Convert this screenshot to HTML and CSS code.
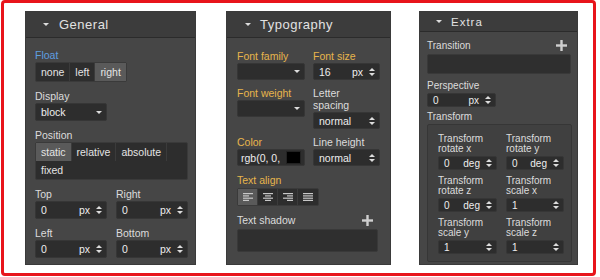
FILE: index.html
```html
<!DOCTYPE html>
<html lang="en">
<head>
  <meta charset="UTF-8" />
  <title>Style manager panels</title>
  <link rel="stylesheet" href="styles.css">
</head>
<body>
  <div class="frame">

    <!-- General -->
    <section class="panel panel-general">
      <header class="panel-head"><span class="head-caret"></span>General</header>
      <div class="panel-body">
        <div class="field">
          <div class="label label-blue">Float</div>
          <div class="radio-group">
            <span class="radio">none</span><span class="radio">left</span><span class="radio active">right</span>
          </div>
        </div>
        <div class="field">
          <div class="label">Display</div>
          <div class="select select-display">block<span class="caret"></span></div>
        </div>
        <div class="field">
          <div class="label">Position</div>
          <div class="radio-group radio-wrap">
            <span class="radio active">static</span><span class="radio">relative</span><span class="radio">absolute</span><span class="radio">fixed</span>
          </div>
        </div>
        <div class="field-pair">
          <div>
            <div class="label">Top</div>
            <div class="number"><span class="value">0</span><span class="unit">px</span><span class="spin"><i class="up"></i><i class="down"></i></span></div>
          </div>
          <div>
            <div class="label">Right</div>
            <div class="number"><span class="value">0</span><span class="unit">px</span><span class="spin"><i class="up"></i><i class="down"></i></span></div>
          </div>
        </div>
        <div class="field-pair">
          <div>
            <div class="label">Left</div>
            <div class="number"><span class="value">0</span><span class="unit">px</span><span class="spin"><i class="up"></i><i class="down"></i></span></div>
          </div>
          <div>
            <div class="label">Bottom</div>
            <div class="number"><span class="value">0</span><span class="unit">px</span><span class="spin"><i class="up"></i><i class="down"></i></span></div>
          </div>
        </div>
      </div>
    </section>

    <!-- Typography -->
    <section class="panel panel-typo">
      <header class="panel-head"><span class="head-caret"></span>Typography</header>
      <div class="panel-body">
        <div class="typo-grid">
          <div>
            <div class="label label-yellow">Font family</div>
            <div class="select"><span class="caret"></span></div>
          </div>
          <div>
            <div class="label label-yellow">Font size</div>
            <div class="number"><span class="value">16</span><span class="unit">px</span><span class="spin"><i class="up"></i><i class="down"></i></span></div>
          </div>
          <div>
            <div class="label label-yellow">Font weight</div>
            <div class="select"><span class="caret"></span></div>
          </div>
          <div>
            <div class="label">Letter<br>spacing</div>
            <div class="number"><span class="value">normal</span><span class="spin"><i class="up"></i><i class="down"></i></span></div>
          </div>
          <div>
            <div class="label label-yellow">Color</div>
            <div class="color-input"><span class="value">rgb(0, 0,</span><span class="swatch"></span></div>
          </div>
          <div>
            <div class="label">Line height</div>
            <div class="number"><span class="value">normal</span><span class="spin"><i class="up"></i><i class="down"></i></span></div>
          </div>
        </div>
        <div class="field">
          <div class="label label-yellow">Text align</div>
          <div class="radio-group align-group">
            <span class="radio active">
              <svg width="10" height="8" viewBox="0 0 10 8"><rect x="0" y="0" width="10" height="1.2"/><rect x="0" y="2.3" width="6" height="1.2"/><rect x="0" y="4.6" width="10" height="1.2"/><rect x="0" y="6.8" width="6" height="1.2"/></svg>
            </span><span class="radio">
              <svg width="10" height="8" viewBox="0 0 10 8"><rect x="0" y="0" width="10" height="1.2"/><rect x="2" y="2.3" width="6" height="1.2"/><rect x="0" y="4.6" width="10" height="1.2"/><rect x="2" y="6.8" width="6" height="1.2"/></svg>
            </span><span class="radio">
              <svg width="10" height="8" viewBox="0 0 10 8"><rect x="0" y="0" width="10" height="1.2"/><rect x="4" y="2.3" width="6" height="1.2"/><rect x="0" y="4.6" width="10" height="1.2"/><rect x="4" y="6.8" width="6" height="1.2"/></svg>
            </span><span class="radio">
              <svg width="10" height="8" viewBox="0 0 10 8"><rect x="0" y="0" width="10" height="1.2"/><rect x="0" y="2.3" width="10" height="1.2"/><rect x="0" y="4.6" width="10" height="1.2"/><rect x="0" y="6.8" width="10" height="1.2"/></svg>
            </span>
          </div>
        </div>
        <div class="field">
          <div class="label label-row">Text shadow
            <svg class="plus" width="11" height="11" viewBox="0 0 11 11"><rect x="4.3" y="0" width="2.4" height="11"/><rect x="0" y="4.3" width="11" height="2.4"/></svg>
          </div>
          <div class="layer-box typo-shadow"></div>
        </div>
      </div>
    </section>

    <!-- Extra -->
    <section class="panel panel-extra">
      <header class="panel-head"><span class="head-caret"></span>Extra</header>
      <div class="panel-body">
        <div class="field">
          <div class="label label-row">Transition
            <svg class="plus" width="11" height="11" viewBox="0 0 11 11"><rect x="4.3" y="0" width="2.4" height="11"/><rect x="0" y="4.3" width="11" height="2.4"/></svg>
          </div>
          <div class="layer-box extra-transition"></div>
        </div>
        <div class="field field-tight">
          <div class="label">Perspective</div>
          <div class="number number-persp"><span class="value">0</span><span class="unit">px</span><span class="spin"><i class="up"></i><i class="down"></i></span></div>
        </div>
        <div class="field">
          <div class="label">Transform</div>
          <div class="transform-box">
            <div>
              <div class="label">Transform<br>rotate x</div>
              <div class="number"><span class="value">0</span><span class="unit">deg</span><span class="spin"><i class="up"></i><i class="down"></i></span></div>
            </div>
            <div>
              <div class="label">Transform<br>rotate y</div>
              <div class="number"><span class="value">0</span><span class="unit">deg</span><span class="spin"><i class="up"></i><i class="down"></i></span></div>
            </div>
            <div>
              <div class="label">Transform<br>rotate z</div>
              <div class="number"><span class="value">0</span><span class="unit">deg</span><span class="spin"><i class="up"></i><i class="down"></i></span></div>
            </div>
            <div>
              <div class="label">Transform<br>scale x</div>
              <div class="number"><span class="value">1</span><span class="spin"><i class="up"></i><i class="down"></i></span></div>
            </div>
            <div>
              <div class="label">Transform<br>scale y</div>
              <div class="number"><span class="value">1</span><span class="spin"><i class="up"></i><i class="down"></i></span></div>
            </div>
            <div>
              <div class="label">Transform<br>scale z</div>
              <div class="number"><span class="value">1</span><span class="spin"><i class="up"></i><i class="down"></i></span></div>
            </div>
          </div>
        </div>
      </div>
    </section>

  </div>
</body>
</html>
```

FILE: styles.css
```css
* {
  box-sizing: border-box;
}

body {
  margin: 0;
  background: #fff;
  font-family: 'Liberation Sans', Arial, Helvetica, sans-serif;
  color: #ddd;
}

.frame {
  display: flex;
  align-items: flex-start;
  width: 595px;
  height: 276px;
  margin-left: 1px;
  padding: 8px 0 0 21px;
  border: 3px solid #e8141b;
  border-radius: 4px;
}

/* ---------- panels ---------- */

.panel {
  height: 254px;
  background: #464646;
  border: 1px solid #3a3a3a;
  overflow: hidden;
}

.panel-general { width: 171px; }
.panel-typo { width: 165px; margin-left: 30px; }
.panel-extra { width: 159px; margin-left: 28px; }

.panel-head {
  display: flex;
  align-items: center;
  height: 26px;
  background: #3c3c3c;
  border-bottom: 1px solid #2b2b2b;
  font-size: 13px;
  letter-spacing: 0.5px;
  color: #e2e2e2;
  padding-left: 17px;
}

.head-caret {
  width: 0;
  height: 0;
  border-left: 3px solid transparent;
  border-right: 3px solid transparent;
  border-top: 3px solid #ddd;
  margin-right: 10px;
}

.panel-body {
  padding: 11px 9px 0 9px;
}

.panel-typo .panel-head { padding-left: 18px; }
.panel-typo .head-caret { margin-right: 9px; }
.panel-typo .panel-body { padding: 12px 12px 0 10px; }

.panel-extra .panel-head {
  height: 20px;
  font-size: 11.5px;
  letter-spacing: 1px;
  padding-left: 16px;
}
.panel-extra .head-caret { margin-right: 9px; }
.panel-extra .panel-body { padding: 6px 5px 0 7px; }

/* ---------- labels ---------- */

.label {
  font-size: 10.5px;
  line-height: 12px;
  margin-bottom: 1px;
  color: #dcdcdc;
}

.label-blue { color: #5f9fe0; }
.label-yellow { color: #e6b54c; }

.label-row {
  display: flex;
  justify-content: space-between;
  align-items: center;
  height: 14px;
  margin-bottom: 2px;
  padding-right: 5px;
}

.plus { fill: #cfcfcf; }

.field { margin-bottom: 8px; }

.field-pair {
  display: grid;
  grid-template-columns: 72px 72px;
  gap: 9px;
  margin-bottom: 8px;
}

/* ---------- controls ---------- */

.radio-group {
  display: inline-flex;
  background: #2d2d2d;
  border: 1px solid #3a3a3a;
  border-radius: 2px;
  height: 20px;
  font-size: 10.5px;
}

.radio {
  display: flex;
  align-items: center;
  padding: 0 5px;
  border-right: 1px solid #3b3b3b;
  color: #e4e4e4;
}

.radio:last-child { border-right: none; }

.radio.active { background: #5a5a5a; }

.radio-wrap {
  display: flex;
  flex-wrap: wrap;
  height: 38px;
  width: 153px;
}

.radio-wrap .radio { height: 18px; }

.align-group { height: 18px; }
.align-group .radio {
  width: 20px;
  justify-content: center;
  padding: 0;
}
.align-group svg { fill: #c8c8c8; }

.select,
.number,
.color-input {
  display: flex;
  align-items: center;
  height: 17px;
  background: #2d2d2d;
  border: 1px solid #363636;
  border-radius: 2px;
  font-size: 10.5px;
  color: #eee;
  padding: 0 4px 0 5px;
}

.select { justify-content: space-between; }
.select-display { width: 72px; height: 18px; }

.caret {
  width: 0;
  height: 0;
  margin-left: auto;
  border-left: 3px solid transparent;
  border-right: 3px solid transparent;
  border-top: 3px solid #ddd;
}

.panel-general .number { height: 18px; }

.number .value { flex: 1; }
.number .unit { margin-right: 6px; }

.spin {
  display: flex;
  flex-direction: column;
  gap: 2px;
}

.spin i {
  display: block;
  width: 0;
  height: 0;
  border-left: 3px solid transparent;
  border-right: 3px solid transparent;
}

.spin .up { border-bottom: 3px solid #ddd; }
.spin .down { border-top: 3px solid #ddd; }

.typo-grid {
  display: grid;
  grid-template-columns: 68px 67px;
  column-gap: 8px;
  row-gap: 7px;
  align-items: start;
  margin-bottom: 8px;
}

.color-input { padding: 0 3px 0 3px; }
.color-input .value { flex: 1; white-space: nowrap; overflow: hidden; }
.swatch {
  width: 15px;
  height: 13px;
  background: #000;
  border: 1px solid #222;
}

.layer-box {
  background: #2f2f2f;
  border: 1px solid #393939;
  border-radius: 2px;
}

.panel-typo .field { margin-bottom: 7px; }
.typo-shadow { height: 23px; }

/* ---------- extra ---------- */

.panel-extra .label {
  font-size: 10px;
  line-height: 11px;
  margin-bottom: 2px;
}

.panel-extra .field { margin-bottom: 6px; }
.panel-extra .field-tight { margin-bottom: 4px; }
.panel-extra .label-row { height: 14px; margin-bottom: 2px; padding-right: 5px; }

.extra-transition { height: 20px; margin-right: 1px; }

.panel-extra .number {
  height: 14px;
  font-size: 10px;
  padding: 0 4px 0 5px;
}

.number-persp { width: 69px; }

.transform-box {
  display: grid;
  grid-template-columns: 59px 58px;
  column-gap: 9px;
  row-gap: 6px;
  height: 138px;
  padding: 9px 10px 0 10px;
  background: #404040;
  border: 1px solid #363636;
  border-radius: 2px;
  align-content: start;
}

.panel-extra .transform-box .label {
  line-height: 10px;
  margin-bottom: 2px;
}
```
